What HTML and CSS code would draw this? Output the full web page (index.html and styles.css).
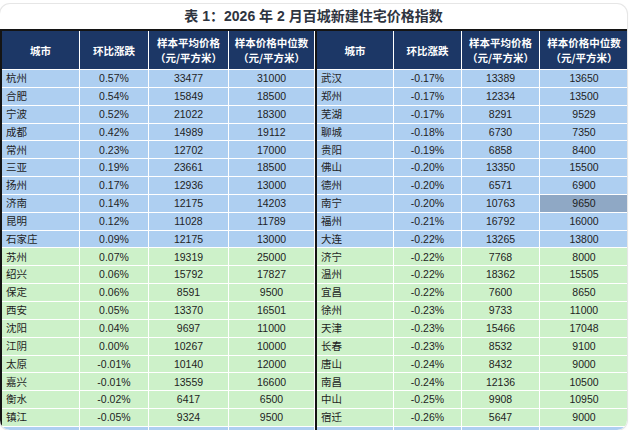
FILE: index.html
```html
<!DOCTYPE html>
<html lang="zh-CN">
<head>
<meta charset="utf-8">
<title>表 1：2026 年 2 月百城新建住宅价格指数</title>
<link rel="stylesheet" href="styles.css">
</head>
<body>
<div class="card">
  <h1 class="title">表 1：2026 年 2 月百城新建住宅价格指数</h1>
  <div class="tables">
    <div class="half">
      <div class="th">城市</div><div class="th">环比涨跌</div><div class="th">样本平均价格<br>（元/平方米）</div><div class="th">样本价格中位数<br>（元/平方米）</div>
      <div class="b city">杭州</div><div class="b">0.57%</div><div class="b">33477</div><div class="b">31000</div>
      <div class="b city">合肥</div><div class="b">0.54%</div><div class="b">15849</div><div class="b">18500</div>
      <div class="b city">宁波</div><div class="b">0.52%</div><div class="b">21022</div><div class="b">18300</div>
      <div class="b city">成都</div><div class="b">0.42%</div><div class="b">14989</div><div class="b">19112</div>
      <div class="b city">常州</div><div class="b">0.23%</div><div class="b">12702</div><div class="b">17000</div>
      <div class="b city">三亚</div><div class="b">0.19%</div><div class="b">23661</div><div class="b">18500</div>
      <div class="b city">扬州</div><div class="b">0.17%</div><div class="b">12936</div><div class="b">13000</div>
      <div class="b city">济南</div><div class="b">0.14%</div><div class="b">12175</div><div class="b">14203</div>
      <div class="b city">昆明</div><div class="b">0.12%</div><div class="b">11028</div><div class="b">11789</div>
      <div class="b city">石家庄</div><div class="b">0.09%</div><div class="b">12175</div><div class="b">13000</div>
      <div class="g city">苏州</div><div class="g">0.07%</div><div class="g">19319</div><div class="g">25000</div>
      <div class="g city">绍兴</div><div class="g">0.06%</div><div class="g">15792</div><div class="g">17827</div>
      <div class="g city">保定</div><div class="g">0.06%</div><div class="g">8591</div><div class="g">9500</div>
      <div class="g city">西安</div><div class="g">0.05%</div><div class="g">13370</div><div class="g">16501</div>
      <div class="g city">沈阳</div><div class="g">0.04%</div><div class="g">9697</div><div class="g">11000</div>
      <div class="g city">江阴</div><div class="g">0.00%</div><div class="g">10267</div><div class="g">10000</div>
      <div class="g city">太原</div><div class="g">-0.01%</div><div class="g">10140</div><div class="g">12000</div>
      <div class="g city">嘉兴</div><div class="g">-0.01%</div><div class="g">13559</div><div class="g">16600</div>
      <div class="g city">衡水</div><div class="g">-0.02%</div><div class="g">6417</div><div class="g">6500</div>
      <div class="g city">镇江</div><div class="g">-0.05%</div><div class="g">9324</div><div class="g">9500</div>
      <div class="cut"></div><div class="cut"></div><div class="cut"></div><div class="cut"></div>
    </div>
    <div class="half right">
      <div class="th">城市</div><div class="th">环比涨跌</div><div class="th">样本平均价格<br>（元/平方米）</div><div class="th">样本价格中位数<br>（元/平方米）</div>
      <div class="b city">武汉</div><div class="b">-0.17%</div><div class="b">13389</div><div class="b">13650</div>
      <div class="b city">郑州</div><div class="b">-0.17%</div><div class="b">12334</div><div class="b">13500</div>
      <div class="b city">芜湖</div><div class="b">-0.17%</div><div class="b">8291</div><div class="b">9529</div>
      <div class="b city">聊城</div><div class="b">-0.18%</div><div class="b">6730</div><div class="b">7350</div>
      <div class="b city">贵阳</div><div class="b">-0.19%</div><div class="b">6858</div><div class="b">8400</div>
      <div class="b city">佛山</div><div class="b">-0.20%</div><div class="b">13350</div><div class="b">15500</div>
      <div class="b city">德州</div><div class="b">-0.20%</div><div class="b">6571</div><div class="b">6900</div>
      <div class="b city">南宁</div><div class="b">-0.20%</div><div class="b">10763</div><div class="b mark">9650</div>
      <div class="b city">福州</div><div class="b">-0.21%</div><div class="b">16792</div><div class="b">16000</div>
      <div class="b city">大连</div><div class="b">-0.22%</div><div class="b">13265</div><div class="b">13800</div>
      <div class="g city">济宁</div><div class="g">-0.22%</div><div class="g">7768</div><div class="g">8000</div>
      <div class="g city">温州</div><div class="g">-0.22%</div><div class="g">18362</div><div class="g">15505</div>
      <div class="g city">宜昌</div><div class="g">-0.22%</div><div class="g">7600</div><div class="g">8650</div>
      <div class="g city">徐州</div><div class="g">-0.23%</div><div class="g">9733</div><div class="g">11000</div>
      <div class="g city">天津</div><div class="g">-0.23%</div><div class="g">15466</div><div class="g">17048</div>
      <div class="g city">长春</div><div class="g">-0.23%</div><div class="g">8532</div><div class="g">9100</div>
      <div class="g city">唐山</div><div class="g">-0.24%</div><div class="g">8432</div><div class="g">9000</div>
      <div class="g city">南昌</div><div class="g">-0.24%</div><div class="g">12136</div><div class="g">10500</div>
      <div class="g city">中山</div><div class="g">-0.25%</div><div class="g">9908</div><div class="g">10950</div>
      <div class="g city">宿迁</div><div class="g">-0.26%</div><div class="g">5647</div><div class="g">9000</div>
      <div class="cut"></div><div class="cut"></div><div class="cut"></div><div class="cut"></div>
    </div>
  </div>
</div>
</body>
</html>
```
FILE: styles.css
```css
* { box-sizing: border-box; }

html, body {
  margin: 0;
  padding: 0;
  background: #ffffff;
}

body {
  font-family: "Liberation Sans", "Noto Sans CJK SC", sans-serif;
  color: #1e1e1e;
}

.card {
  margin-top: 4px;
  width: 627px;
  height: 426px;
  border-radius: 10px;
  overflow: hidden;
  background: #ffffff;
  box-shadow: 0 0 0 1px #e6e6e6, 0 1px 3px rgba(0, 0, 0, 0.08);
}

.title {
  margin: 0;
  height: 25px;
  padding-top: 3px;
  text-align: center;
  font-family: "Liberation Sans", "Noto Sans CJK SC", sans-serif;
  font-size: 14px;
  font-weight: bold;
  line-height: 18px;
  color: #2e3440;
}

.tables {
  display: flex;
  border-top: 2px solid #141414;
}

.half {
  display: grid;
  grid-template-columns: 77px 68px 79px 85px;
  grid-template-rows: 38px;
  grid-auto-rows: 16.85px;
  gap: 1px;
  background: #ffffff;
  border-left: 2px solid #141414;
}

.half.right {
  grid-template-columns: 76px 67px 77px 88px;
  margin-left: 1px;
}

.th {
  background: #1c3766;
  color: #ffffff;
  font-family: "Noto Sans CJK SC", sans-serif;
  font-weight: bold;
  font-size: 10.5px;
  line-height: 15px;
  display: flex;
  align-items: center;
  justify-content: center;
  text-align: center;
}

.b, .g {
  font-size: 10.5px;
  display: flex;
  align-items: center;
  justify-content: center;
  line-height: 1;
}

.b { background: #aecff1; }
.g { background: #cdf1c9; }

.city {
  justify-content: flex-start;
  padding-left: 4px;
}

.mark { background: #8fa8c5; }

.cut { background: #aecff1; }
```
